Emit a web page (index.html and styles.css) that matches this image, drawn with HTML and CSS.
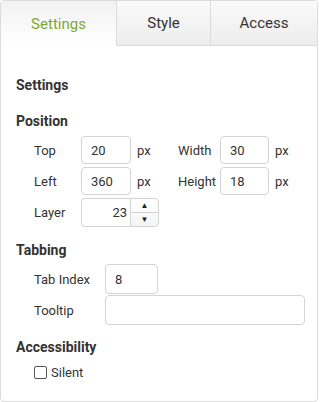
FILE: index.html
```html
<!DOCTYPE html>
<html lang="en">
<head>
  <meta charset="UTF-8">
  <title>Properties</title>
  <link rel="stylesheet" href="styles.css">
</head>
<body>
  <div class="panel">
    <div class="tabs">
      <div class="tab active">Settings</div>
      <div class="tab">Style</div>
      <div class="tab last">Access</div>
    </div>
    <div class="body">
      <h3 class="title">Settings</h3>

      <h3>Position</h3>
      <div class="pos-grid">
        <label>Top</label>
        <input class="field" value="20">
        <span class="unit">px</span>
        <label>Width</label>
        <input class="field" value="30">
        <span class="unit">px</span>

        <label>Left</label>
        <input class="field" value="360">
        <span class="unit">px</span>
        <label>Height</label>
        <input class="field" value="18">
        <span class="unit">px</span>

        <label>Layer</label>
        <div class="spin">
          <input class="spin-field" value="23">
          <div class="spin-btns">
            <span class="up">&#9650;</span>
            <span class="down">&#9660;</span>
          </div>
        </div>
      </div>

      <h3>Tabbing</h3>
      <div class="tab-grid">
        <label>Tab Index</label>
        <input class="field short" value="8">
        <label>Tooltip</label>
        <input class="field wide" value="">
      </div>

      <h3>Accessibility</h3>
      <label class="check"><span class="box"></span>Silent</label>
    </div>
  </div>
</body>
</html>
```
FILE: styles.css
```css
html, body {
  margin: 0;
  padding: 0;
}
body {
  background: #fff;
  color: #333;
  font-family: Roboto, "Liberation Sans", sans-serif;
  font-size: 13px;
}

.panel {
  width: 316px;
  height: 400px;
  border: 1px solid #dcdcdc;
  border-radius: 4px;
  overflow: hidden;
}

.tabs {
  display: flex;
  height: 45px;
}
.tab {
  box-sizing: border-box;
  width: 94px;
  display: flex;
  align-items: center;
  justify-content: center;
  font-size: 15px;
  color: #333;
  background: linear-gradient(#fafafa, #ededed);
  border-bottom: 1px solid #dcdcdc;
  border-left: 1px solid #dcdcdc;
}
.tab.active {
  width: 115px;
  color: #7da636;
  background: linear-gradient(#f2f2f2, #fff);
  border: none;
}
.tab.last {
  flex: 1;
}

.body {
  padding: 0 15px;
}
h3 {
  margin: 0;
  font-size: 14px;
  font-weight: bold;
  color: #333;
}
h3.title {
  margin-top: 31px;
  margin-bottom: 20px;
}

.pos-grid {
  display: grid;
  grid-template-columns: 47px 50px 47px 42px 49px auto;
  row-gap: 3px;
  align-items: center;
  margin: 7px 0 0 18px;
}
.unit {
  padding-left: 6px;
}

.field {
  box-sizing: border-box;
  height: 28px;
  width: 100%;
  border: 1px solid #d4d4d4;
  border-radius: 4px;
  padding: 0 9px;
  font-family: inherit;
  font-size: 13px;
  color: #333;
  background: #fff;
  outline: none;
}

.spin {
  grid-column: 2 / 4;
  display: flex;
  width: 78px;
  height: 29px;
}
.spin-field {
  box-sizing: border-box;
  width: 49px;
  height: 100%;
  border: 1px solid #d4d4d4;
  border-right: none;
  border-radius: 4px 0 0 4px;
  text-align: right;
  padding: 0 3px;
  font-family: inherit;
  font-size: 13px;
  color: #333;
  outline: none;
}
.spin-btns {
  box-sizing: border-box;
  width: 29px;
  display: flex;
  flex-direction: column;
  border: 1px solid #d4d4d4;
  border-radius: 0 4px 4px 0;
  background: linear-gradient(#fff, #f4f4f4);
}
.spin-btns span {
  flex: 1;
  display: flex;
  align-items: center;
  justify-content: center;
  font-size: 8px;
  color: #222;
}
.spin-btns .up {
  border-bottom: 1px solid #d4d4d4;
}

.pos-grid + h3 {
  margin-top: 15px;
}

.tab-grid {
  display: grid;
  grid-template-columns: 71px 200px;
  row-gap: 1px;
  align-items: center;
  margin: 6px 0 14px 18px;
}
.tab-grid .field {
  height: 30px;
}
.field.short {
  width: 53px;
}

.check {
  display: flex;
  align-items: center;
  gap: 4px;
  margin: 10px 0 0 18px;
}
.box {
  box-sizing: border-box;
  width: 13px;
  height: 13px;
  border: 1px solid #555;
  border-radius: 2px;
}
```
